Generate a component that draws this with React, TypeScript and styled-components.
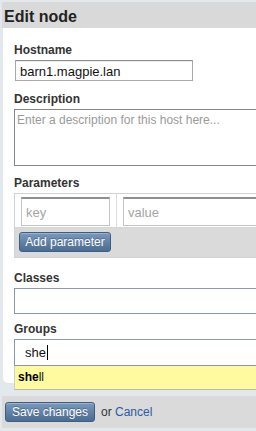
import React from 'react';
import styled, { createGlobalStyle } from 'styled-components';

const GlobalStyle = createGlobalStyle`
	html, body {
		margin: 0;
		padding: 0;
		background: #e3e8ec;
		font-family: 'Liberation Sans', Arial, sans-serif;
		color: #333;
	}
	body {
		overflow: hidden;
	}
`;

const App = () => (
	<>
		<GlobalStyle />
		<Dialog>
			<Header>
				<Title>Edit node</Title>
			</Header>
			<Panel>
				<Field>
					<Label>Hostname</Label>
					<TextInput defaultValue="barn1.magpie.lan" $width={178} $inset={1} />
				</Field>
				<Field $gap={11}>
					<Label>Description</Label>
					<TextArea placeholder="Enter a description for this host here..." />
				</Field>
				<Field $gap={10}>
					<Label>Parameters</Label>
					<ParamBox>
						<ParamRow>
							<ParamCell $divider>
								<ParamInput placeholder="key" />
							</ParamCell>
							<ParamCell>
								<ParamInput placeholder="value" />
							</ParamCell>
						</ParamRow>
						<ParamActions>
							<BlueButton type="button">Add parameter</BlueButton>
						</ParamActions>
					</ParamBox>
				</Field>
				<Field $gap={13}>
					<Label>Classes</Label>
					<TagBox />
				</Field>
				<Field $gap={8}>
					<Label>Groups</Label>
					<Autocomplete>
						<TagBox $typing>
							she
							<Caret />
						</TagBox>
						<Suggestions>
							<Suggestion>
								<b>she</b>ll
							</Suggestion>
						</Suggestions>
					</Autocomplete>
				</Field>
			</Panel>
			<Footer>
				<BlueButton type="button" $large>
					Save changes
				</BlueButton>
				<FooterText>
					or <CancelLink href="#">Cancel</CancelLink>
				</FooterText>
			</Footer>
		</Dialog>
	</>
);

export default App;

const Dialog = styled('div')`
	width: 300px;
	padding-top: 2px;
	padding-left: 2px;
`;

const Header = styled('div')`
	height: 26px;
	background: #d9d9d9;
	padding: 3px 0 0 2px;
	box-sizing: border-box;
`;

const Title = styled('h1')`
	margin: 0;
	font-size: 16px;
	line-height: 23px;
	font-weight: bold;
	color: #222;
`;

const Panel = styled('div')`
	margin-left: 1px;
	background: #ffffff;
	padding: 15px 0 17px 11px;
	border-bottom-left-radius: 5px;
`;

const Field = styled('div')<{ $gap?: number }>`
	margin-top: ${(p) => p.$gap || 0}px;
`;

const Label = styled('label')`
	display: block;
	font-size: 12px;
	line-height: 14px;
	font-weight: bold;
	color: #333;
	margin-bottom: 3px;
`;

const TextInput = styled('input')<{ $width: number; $inset?: number }>`
	display: block;
	box-sizing: border-box;
	width: ${(p) => p.$width}px;
	height: 21px;
	margin-left: ${(p) => p.$inset || 0}px;
	padding: 1px 4px 0;
	border: 1px solid #a9a9a9;
	border-top-color: #8c8c8c;
	box-shadow: inset 0 1px 1px rgba(0, 0, 0, 0.08);
	font-family: 'Liberation Sans', Arial, sans-serif;
	font-size: 13px;
	color: #111;
	outline: none;
`;

const TextArea = styled('textarea')`
	display: block;
	box-sizing: border-box;
	width: 100%;
	height: 57px;
	margin: 0;
	padding: 3px 2px;
	border: 1px solid #858585;
	resize: none;
	font-family: 'Liberation Sans', Arial, sans-serif;
	font-size: 12px;
	outline: none;
	&::placeholder {
		color: #9a9a9a;
	}
`;

const ParamBox = styled('div')`
	border: 1px solid #d2d2d2;
	border-right: none;
`;

const ParamRow = styled('div')`
	display: flex;
	background: #ffffff;
	border-bottom: 1px solid #d6d6d6;
`;

const ParamCell = styled('div')<{ $divider?: boolean }>`
	padding: 3px 0 1px 6px;
	border-right: ${(p) => (p.$divider ? '1px solid #dcdcdc' : 'none')};
	width: ${(p) => (p.$divider ? '89px' : 'auto')};
	padding-right: ${(p) => (p.$divider ? '6px' : '0')};
	flex: ${(p) => (p.$divider ? 'none' : '1')};
`;

const ParamInput = styled('input')`
	display: block;
	box-sizing: border-box;
	width: 100%;
	height: 29px;
	margin: 0;
	padding: 0 4px;
	border: 1px solid #c4c4c4;
	border-top: 2px solid #8f8f8f;
	font-family: 'Liberation Sans', Arial, sans-serif;
	font-size: 13px;
	outline: none;
	&::placeholder {
		color: #a5a5a5;
	}
`;

const ParamActions = styled('div')`
	background: #dadada;
	padding: 4px 0 5px 4px;
`;

const BlueButton = styled('button')<{ $large?: boolean }>`
	display: inline-block;
	box-sizing: border-box;
	height: 20px;
	width: ${(p) => (p.$large ? '90px' : '92px')};
	padding: 0;
	border: 1px solid #3f5d82;
	border-radius: 3px;
	background: linear-gradient(#7a99bd, #4b6b92);
	box-shadow: inset 0 1px 0 rgba(255, 255, 255, 0.25);
	color: #ffffff;
	font-family: 'Liberation Sans', Arial, sans-serif;
	font-size: 12px;
	line-height: 18px;
	text-shadow: 0 -1px 0 rgba(0, 0, 0, 0.25);
	cursor: pointer;
`;

const TagBox = styled('div')<{ $typing?: boolean }>`
	box-sizing: border-box;
	height: ${(p) => (p.$typing ? '27px' : '26px')};
	border: 1px solid #8b97b1;
	background: #ffffff;
	padding-left: 10px;
	font-size: 13px;
	line-height: 25px;
	color: #111;
	display: flex;
	align-items: center;
`;

const Caret = styled('span')`
	display: inline-block;
	width: 1px;
	height: 15px;
	margin-left: 1px;
	background: #000;
`;

const Autocomplete = styled('div')`
	position: relative;
`;

const Suggestions = styled('ul')`
	position: absolute;
	left: 0;
	right: 0;
	top: 100%;
	margin: 0;
	padding: 0;
	list-style: none;
	background: #fff99f;
	border-left: 1px solid #d0d0c0;
	border-bottom: 1px solid #b8b8b8;
`;

const Suggestion = styled('li')`
	height: 23px;
	padding-left: 3px;
	font-size: 12px;
	line-height: 23px;
	color: #111;
	b {
		font-weight: bold;
		color: #000;
	}
`;

const Footer = styled('div')`
	margin-top: 13px;
	height: 32px;
	background: #dadada;
	display: flex;
	align-items: center;
	gap: 6px;
	padding-left: 3px;
`;

const FooterText = styled('span')`
	font-size: 12px;
	color: #333;
`;

const CancelLink = styled('a')`
	color: #2a5aa5;
	text-decoration: none;
`;
